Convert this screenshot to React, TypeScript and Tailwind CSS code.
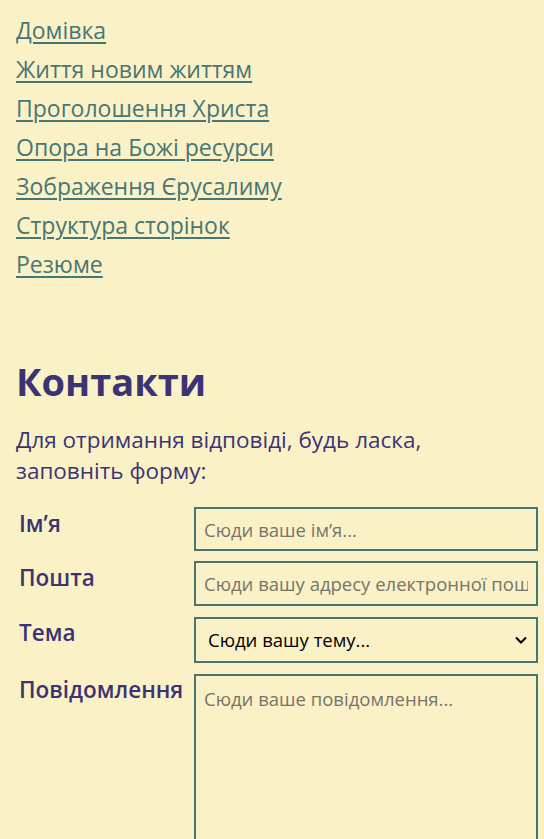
const LINKS = [
  "Домівка",
  "Життя новим життям",
  "Проголошення Христа",
  "Опора на Божі ресурси",
  "Зображення Єрусалиму",
  "Структура сторінок",
  "Резюме",
];

const label = "pl-[3px] pt-[1px] text-[22.5px] font-semibold leading-[32px]";
const field =
  "border-2 border-[#477774] bg-transparent px-[8px] text-[18.5px] placeholder:text-[#77746a] outline-none";

export default function App() {
  return (
    <div className="min-h-[839px] bg-[#fbf1c7] px-4 pt-[14px] font-['Open_Sans',sans-serif] text-[#3b3474]">
      <nav className="flex flex-col gap-[7px]">
        {LINKS.map((l) => (
          <a
            key={l}
            href="#"
            className="w-fit text-[23px] leading-[32px] text-[#477774] underline underline-offset-[3px] decoration-[1.5px]"
          >
            {l}
          </a>
        ))}
      </nav>

      <h2 className="mt-[73px] text-[38px] font-bold leading-[56px]">Контакти</h2>
      <p className="mt-[15px] max-w-[430px] text-[22.5px] leading-[31px]">
        Для отримання відповіді, будь ласка, заповніть форму:
      </p>

      <form className="mt-[21px] mr-[-10px] grid grid-cols-[178px_1fr] gap-y-[10px]">
        <label className={label}>Ім’я</label>
        <input placeholder="Сюди ваше ім’я..." className={`h-[44px] ${field}`} />
        <label className={label}>Пошта</label>
        <input
          placeholder="Сюди вашу адресу електронної пошти..."
          className={`h-[45px] ${field}`}
        />
        <label className={label}>Тема</label>
        <div className="relative mt-[1px] h-[46px] border-2 border-[#477774]">
          <select className="h-full w-full appearance-none bg-transparent pl-[12px] text-[18.5px] text-black outline-none">
            <option>Сюди вашу тему...</option>
          </select>
          <svg
            className="pointer-events-none absolute right-[8px] top-[16px]"
            width="14"
            height="10"
            viewBox="0 0 14 10"
          >
            <path d="M2 2.5 L7 7.5 L12 2.5" stroke="black" strokeWidth="2" fill="none" />
          </svg>
        </div>
        <label className={label}>Повідомлення</label>
        <textarea
          placeholder="Сюди ваше повідомлення..."
          className={`mt-[1px] h-[200px] resize-none py-[9px] ${field}`}
        />
      </form>
    </div>
  );
}
